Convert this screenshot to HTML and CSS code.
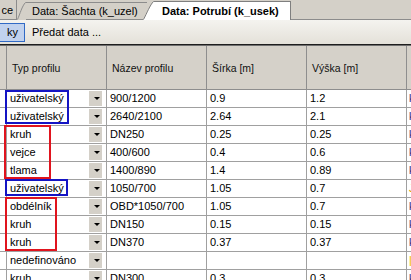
FILE: index.html
```html
<!DOCTYPE html>
<html lang="cs">
<head>
  <meta charset="UTF-8">
  <title>Data: Potrubí</title>
  <link rel="stylesheet" href="styles.css">
</head>
<body>
  <div class="tabs">
    <div class="tab first">ce</div>
    <div class="tab">
      <svg class="slant" width="9" height="20" viewBox="0 0 9 20"><path d="M0 20 C3 14 5 6 9 2 L9 20 Z" fill="#d4d0c8"/><path d="M0.5 19.5 C3 14 5 6 8.5 2.5 L9 2.5" fill="none" stroke="#8c8c8c"/></svg>
      <span class="label">Data: Šachta (k_uzel)</span>
    </div>
    <div class="tab active">
      <svg class="slant" width="11" height="20" viewBox="0 0 11 20"><path d="M0 20 C4 13 7 5 11 1 L11 20 Z" fill="#fff"/><path d="M0.5 19.5 C4 13 7 5 10.5 1.5 L11 1.5" fill="none" stroke="#7f7f7f"/></svg>
      <span class="label">Data: Potrubí (k_usek)</span>
    </div>
    <div class="tabs-rest"></div>
  </div>

  <div class="toolbar">
    <div class="tbtn checked">ky</div>
    <div class="tbtn">Předat data ...</div>
  </div>

  <div class="gridwrap">
    <div class="grid">
      <div class="hd"></div>
      <div class="hd">Typ profilu</div>
      <div class="hd">Název profilu</div>
      <div class="hd">Šírka [m]</div>
      <div class="hd">Výška [m]</div>
      <div class="hd"></div>

      <div class="c0"></div><div class="c combo">uživatelský<span class="dd"></span></div><div class="c">900/1200</div><div class="c">0.9</div><div class="c">1.2</div><div class="c dark">kruh</div>
      <div class="c0"></div><div class="c combo">uživatelský<span class="dd"></span></div><div class="c">2640/2100</div><div class="c">2.64</div><div class="c">2.1</div><div class="c dark">kruh</div>
      <div class="c0"></div><div class="c combo">kruh<span class="dd"></span></div><div class="c">DN250</div><div class="c">0.25</div><div class="c">0.25</div><div class="c dark">kruh</div>
      <div class="c0"></div><div class="c combo">vejce<span class="dd"></span></div><div class="c">400/600</div><div class="c">0.4</div><div class="c">0.6</div><div class="c dark">kruh</div>
      <div class="c0"></div><div class="c combo">tlama<span class="dd"></span></div><div class="c">1400/890</div><div class="c">1.4</div><div class="c">0.89</div><div class="c dark">kruh</div>
      <div class="c0"></div><div class="c combo">uživatelský<span class="dd"></span></div><div class="c">1050/700</div><div class="c">1.05</div><div class="c">0.7</div><div class="c warn">J</div>
      <div class="c0"></div><div class="c combo">obdélník<span class="dd"></span></div><div class="c">OBD*1050/700</div><div class="c">1.05</div><div class="c">0.7</div><div class="c dark">kruh</div>
      <div class="c0"></div><div class="c combo">kruh<span class="dd"></span></div><div class="c">DN150</div><div class="c">0.15</div><div class="c">0.15</div><div class="c dark">kruh</div>
      <div class="c0"></div><div class="c combo">kruh<span class="dd"></span></div><div class="c">DN370</div><div class="c">0.37</div><div class="c">0.37</div><div class="c dark">kruh</div>
      <div class="c0"></div><div class="c combo">nedefinováno<span class="dd"></span></div><div class="c"></div><div class="c"></div><div class="c"></div><div class="c light">|</div>
      <div class="c0"></div><div class="c combo">kruh<span class="dd"></span></div><div class="c">DN300</div><div class="c">0.3</div><div class="c">0.3</div><div class="c dark">kruh</div>
    </div>

    <!-- vyznacene skupiny -->
    <div class="mark blue" style="left:5px; top:44px; width:64px; height:34px"></div>
    <div class="mark red" style="left:4px; top:79px; width:47px; height:54px"></div>
    <div class="mark blue" style="left:5px; top:133px; width:63px; height:17px"></div>
    <div class="mark red" style="left:5px; top:151px; width:52px; height:54px"></div>
  </div>
</body>
</html>
```

FILE: styles.css
```css
html, body {
  margin: 0;
  padding: 0;
}
body {
  width: 411px;
  height: 280px;
  overflow: hidden;
  background: #fff;
  font-family: 'Liberation Sans', Arial, sans-serif;
  font-size: 11px;
  color: #000;
}

/* zalozky */
.tabs {
  display: flex;
  height: 20px;
  background: #d4d0c8;
}
.tab {
  display: flex;
  align-items: stretch;
  height: 20px;
  box-sizing: border-box;
}
.tab .label {
  display: flex;
  align-items: center;
  box-sizing: border-box;
  border-top: 1px solid #8c8c8c;
  border-bottom: 1px solid #8c8c8c;
  margin-top: 2px;
  height: 18px;
  padding-left: 6px;
  width: 121px;
  white-space: nowrap;
}
.tab.first {
  width: 17px;
  align-items: center;
  justify-content: flex-end;
  padding-right: 3px;
  box-sizing: border-box;
  border-right: 1px solid #8c8c8c;
  border-bottom: 1px solid #8c8c8c;
}
.tab.active {
  margin-left: -4px;
}
.tab.active .label {
  background: #fff;
  font-weight: bold;
  width: 137px;
  margin-top: 1px;
  height: 19px;
  border-top-color: #7f7f7f;
  border-bottom: none;
  border-right: 1px solid #7f7f7f;
  padding-left: 8px;
}
.tabs-rest {
  flex: 1;
  border-bottom: 1px solid #8c8c8c;
}

/* nastrojova lista */
.toolbar {
  display: flex;
  align-items: center;
  height: 25px;
  background: linear-gradient(#f4f3ef, #e4e1d9);
  border-bottom: 1px solid #1e1e1e;
  box-sizing: border-box;
}
.tbtn {
  height: 19px;
  line-height: 17px;
  box-sizing: border-box;
  padding: 0 5px 0 4px;
  border: 1px solid transparent;
  margin-right: 2px;
}
.tbtn.checked {
  width: 25px;
  text-align: right;
  padding-right: 6px;
  background: #c1d2ee;
  border-color: #316ac5;
  border-left: none;
}

/* mrizka */
.gridwrap {
  position: relative;
  border-top: 1px solid #6f6f6f;
}
.grid {
  display: grid;
  grid-template-columns: 7px 100px 100px 100px 100px 100px;
  grid-template-rows: 44px;
  grid-auto-rows: 18px;
  width: 507px;
}
.hd {
  background: #d5d1c9;
  border-right: 1px solid #8e8e8e;
  border-bottom: 1px solid #8e8e8e;
  box-sizing: border-box;
  display: flex;
  align-items: center;
  padding-left: 5px;
  font-size: 10.5px;
  color: #111;
}
.c0, .c {
  box-sizing: border-box;
  border-right: 1px solid #a0a0a0;
  border-bottom: 1px solid #a0a0a0;
  line-height: 17px;
  white-space: nowrap;
  overflow: hidden;
}
.c {
  padding-left: 3px;
}
.c.combo {
  display: flex;
  align-items: center;
  justify-content: space-between;
  padding-right: 4px;
}
.dd {
  width: 13px;
  height: 15px;
  background: #d4d0c8;
  display: flex;
  align-items: center;
  justify-content: center;
}
.dd::after {
  content: "";
  border-left: 3px solid transparent;
  border-right: 3px solid transparent;
  border-top: 3px solid #000;
  margin-left: 2px;
}
.dark {
  color: #3a2b6c;
  padding-left: 2px;
}
.warn {
  color: #d9a400;
  padding-left: 2px;
}
.light {
  color: #f3c94a;
  padding-left: 2px;
  font-weight: bold;
}

.mark {
  position: absolute;
  box-sizing: border-box;
  border: 2px solid;
}
.mark.blue {
  border-color: #1414c4;
}
.mark.red {
  border-color: #e0141e;
}
```
